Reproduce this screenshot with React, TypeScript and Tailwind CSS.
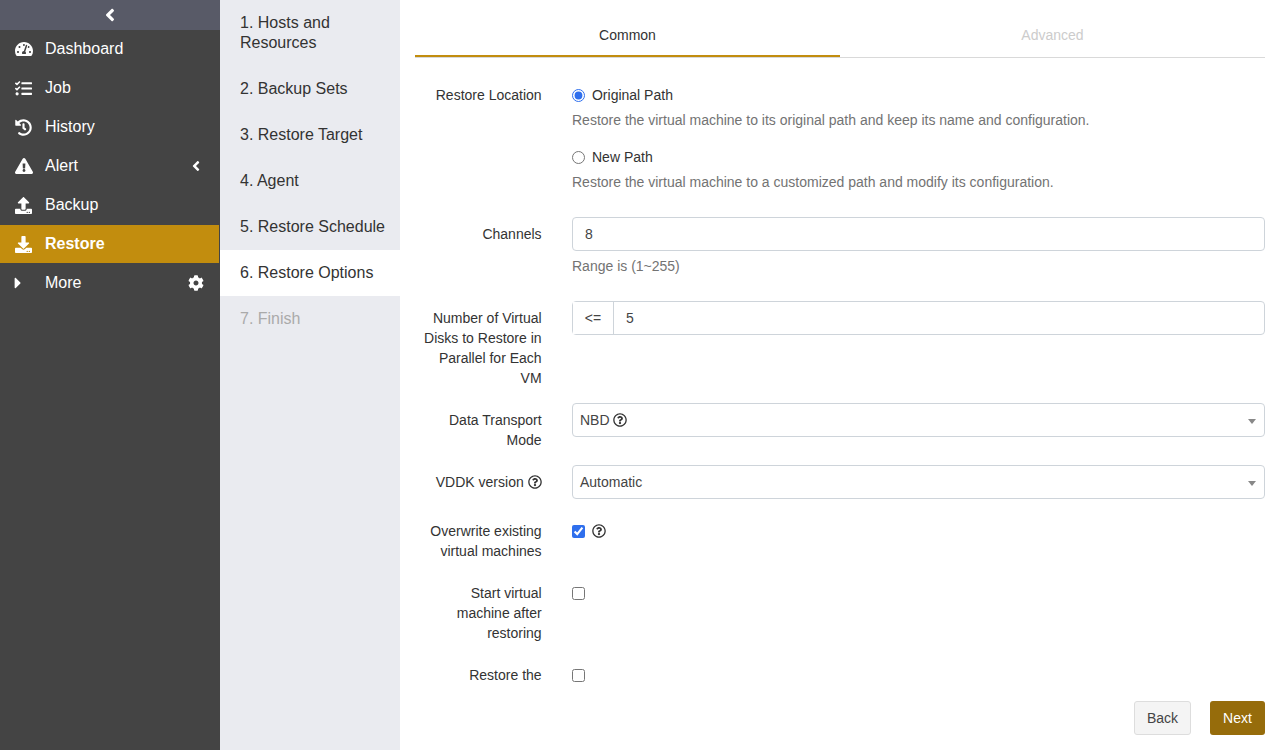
import type { ReactNode } from "react";
import {
  FaAngleLeft,
  FaCaretRight,
  FaCog,
  FaDownload,
  FaExclamationTriangle,
  FaHistory,
  FaRegQuestionCircle,
  FaTachometerAlt,
  FaTasks,
  FaUpload,
} from "react-icons/fa";

const NAV_ITEMS = [
  { label: "Dashboard", icon: <FaTachometerAlt size={18} /> },
  { label: "Job", icon: <FaTasks size={17} /> },
  { label: "History", icon: <FaHistory size={17} /> },
  { label: "Alert", icon: <FaExclamationTriangle size={18} />, right: <FaAngleLeft size={16} /> },
  { label: "Backup", icon: <FaUpload size={17} /> },
  { label: "Restore", icon: <FaDownload size={17} />, active: true },
  {
    label: "More",
    icon: <FaCaretRight size={18} className="-ml-[6px]" />,
    right: <FaCog size={16} />,
  },
];

const STEPS = [
  { label: "1. Hosts and Resources" },
  { label: "2. Backup Sets" },
  { label: "3. Restore Target" },
  { label: "4. Agent" },
  { label: "5. Restore Schedule" },
  { label: "6. Restore Options", active: true },
  { label: "7. Finish", disabled: true },
];

const Help = () => <FaRegQuestionCircle size={14} className="inline-block align-[-2px] text-[#333]" />;

const Row = ({ label, className, children }: { label: ReactNode; className: string; children?: ReactNode }) => (
  <div className={`flex gap-[30.4px] ${className}`}>
    <div className="w-[126.6px] shrink-0 text-right text-[#333]">{label}</div>
    <div className="min-w-0 flex-1">{children}</div>
  </div>
);

const Caret = () => (
  <span className="absolute right-[8px] top-[15px] h-0 w-0 border-x-[4px] border-t-[5px] border-x-transparent border-t-[#888]" />
);

const App = () => {
  return (
    <div className="flex h-[750px] w-[1280px] overflow-hidden bg-white font-['Liberation_Sans',Arial,sans-serif] text-[14px] leading-[20px]">
      <aside className="h-full w-[220px] shrink-0 bg-[#444444] text-white">
        <div className="flex h-[30px] items-center justify-center bg-[#585a67] pr-[1px]">
          <FaAngleLeft size={20} />
        </div>
        {NAV_ITEMS.map((item) => (
          <div
            key={item.label}
            className={`mb-px mr-px flex h-[38px] items-center pl-[15px] pr-[14px] text-[16px] ${
              item.active ? "bg-[#c28d0e] font-bold" : ""
            }`}
          >
            <span className="flex w-[30px] shrink-0 items-center">{item.icon}</span>
            <span className="flex-1">{item.label}</span>
            {item.right && <span className="flex w-[18px] justify-center">{item.right}</span>}
          </div>
        ))}
      </aside>

      <nav className="h-full w-[180px] shrink-0 bg-[#eaebf0] pt-[13px] text-[16px] text-[#333]">
        {STEPS.map((step, index) => (
          <div
            key={step.label}
            className={`pl-[20px] pr-[10px] ${index === 0 ? "pb-[13px]" : "py-[13px]"} ${step.active ? "bg-white" : ""} ${
              step.disabled ? "text-[#aaaaaa]" : ""
            }`}
          >
            {step.label}
          </div>
        ))}
      </nav>

      <main className="flex h-full min-w-0 flex-1 flex-col px-[15px]">
        <div className="flex h-[58px] shrink-0 border-b border-[#d9d9d9]">
          <div className="flex h-[57px] flex-1 items-center justify-center border-b-2 border-[#c28d0e] pt-[15px] text-[#333]">
            Common
          </div>
          <div className="flex h-[57px] flex-1 items-center justify-center pt-[13px] text-[#cccccc]">Advanced</div>
        </div>

        <div className="min-h-0 flex-1 overflow-hidden">
          <Row label="Restore Location" className="mt-[27px]">
            <label className="flex h-[20px] items-center gap-[7px] text-[#333]">
              <input type="radio" name="path" defaultChecked className="m-0 h-[13px] w-[13px] accent-[#2f6fed]" />
              Original Path
            </label>
            <p className="mt-[5px] text-[#737373]">Restore the virtual machine to its original path and keep its name and configuration.</p>
            <label className="mt-[17px] flex h-[20px] items-center gap-[7px] text-[#333]">
              <input type="radio" name="path" className="m-0 h-[13px] w-[13px]" />
              New Path
            </label>
            <p className="mt-[5px] text-[#737373]">Restore the virtual machine to a customized path and modify its configuration.</p>
          </Row>

          <Row label={<span className="block pt-[7px]">Channels</span>} className="mt-[25px]">
            <div className="flex h-[34px] items-center rounded-[4px] border border-[#ced4da] px-[12px] text-[#444]">8</div>
            <p className="mt-[5px] text-[#737373]">Range is (1~255)</p>
          </Row>

          <Row
            label={<span className="block pt-[7px]">Number of Virtual Disks to Restore in Parallel for Each VM</span>}
            className="mt-[25px]"
          >
            <div className="flex h-[34px] items-center rounded-[4px] border border-[#ced4da] text-[#444]">
              <span className="flex h-full w-[41px] items-center justify-center border-r border-[#ced4da] bg-white">&lt;=</span>
              <span className="pl-[12px]">5</span>
            </div>
          </Row>

          <Row label={<span className="block pt-[7px]">Data Transport Mode</span>} className="mt-[15px]">
            <div className="relative flex h-[34px] items-center gap-[3px] rounded-[4px] border border-[#ced4da] pl-[7px] text-[#444]">
              NBD <Help />
              <Caret />
            </div>
          </Row>

          <Row
            label={
              <span className="block pt-[7px]">
                VDDK version <Help />
              </span>
            }
            className="mt-[15px]"
          >
            <div className="relative flex h-[34px] items-center rounded-[4px] border border-[#ced4da] pl-[7px] text-[#444]">
              Automatic
              <Caret />
            </div>
          </Row>

          <Row label="Overwrite existing virtual machines" className="mt-[22px]">
            <div className="flex h-[20px] items-center gap-[7px]">
              <input type="checkbox" defaultChecked className="m-0 h-[13px] w-[13px] accent-[#2f6fed]" />
              <Help />
            </div>
          </Row>

          <Row label="Start virtual machine after restoring" className="mt-[22px]">
            <div className="flex h-[20px] items-center">
              <input type="checkbox" className="m-0 h-[13px] w-[13px]" />
            </div>
          </Row>

          <Row label="Restore the" className="mt-[22px]">
            <div className="flex h-[20px] items-center">
              <input type="checkbox" className="m-0 h-[13px] w-[13px]" />
            </div>
          </Row>
        </div>

        <div className="flex h-[60px] shrink-0 items-start justify-end gap-[19px] pt-[11px]">
          <button className="h-[34px] w-[57px] rounded-[3px] border border-[#dddddd] bg-[#f4f4f4] text-[#444]">Back</button>
          <button className="h-[34px] w-[55px] rounded-[3px] bg-[#966c0b] text-white">Next</button>
        </div>
      </main>
    </div>
  );
};

export default App;
